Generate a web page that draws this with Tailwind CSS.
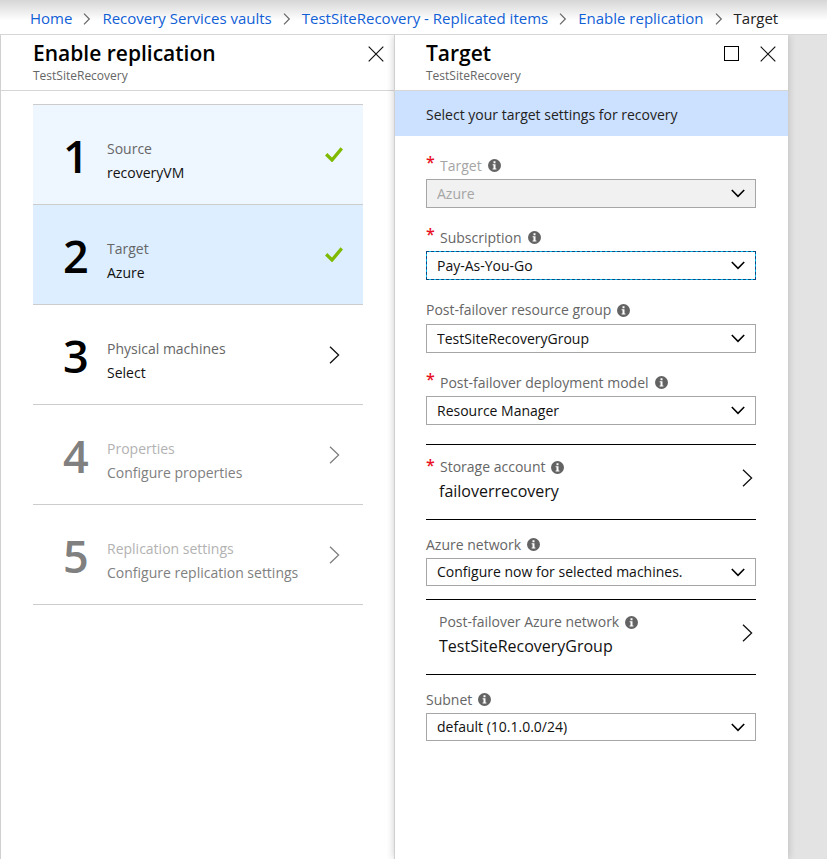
<!DOCTYPE html>
<html lang="en">
<head>
<meta charset="utf-8">
<meta name="viewport" content="width=device-width, initial-scale=1">
<title>Enable replication - Target</title>
<script src="https://cdn.jsdelivr.net/npm/@tailwindcss/browser@4"></script>
</head>
<body class="flex min-h-screen flex-col bg-white font-['Open_Sans','Noto_Sans',sans-serif] text-sm text-[#111]">
<svg class="hidden" aria-hidden="true">
  <symbol id="crumb" viewBox="0 0 8 12"><path d="M1 .7 6.3 6 1 11.3" fill="none" stroke="#666" stroke-width="1.2"/></symbol>
  <symbol id="close" viewBox="0 0 16 16"><path d="M.7.7 15.3 15.3M15.3.7.7 15.3" fill="none" stroke="#111" stroke-width="1.2"/></symbol>
  <symbol id="check" viewBox="0 0 18 15"><path d="M1.2 7.3 7 13 16.8 1.4" fill="none" stroke="#7fba00" stroke-width="3.3"/></symbol>
  <symbol id="next" viewBox="0 0 11 18"><path d="M1 .8 9.6 9 1 17.2" fill="none" stroke="currentColor" stroke-width="1.3"/></symbol>
  <symbol id="down" viewBox="0 0 14 9"><path d="M.8 1 7 7.3 13.2 1" fill="none" stroke="#000" stroke-width="1.6"/></symbol>
  <symbol id="info" viewBox="0 0 13 13"><circle cx="6.5" cy="6.5" r="6.5" fill="#636363"/><path d="M5.5 2.2h2v2h-2zM4.6 5.2h2.9v4.4h.9v1H4.6v-1h.9V6.2h-.9z" fill="#fff"/></symbol>
</svg>

<nav aria-label="Breadcrumb" class="h-[35px] shrink-0 border-b border-[#d6d6d6] bg-linear-to-b from-[#d6d6d6] to-white to-60%">
  <ol class="flex h-[37px] items-center gap-[11px] pl-[30px] text-[15px] whitespace-nowrap text-[#1160d6]">
    <li><a href="#">Home</a></li>
    <li aria-hidden="true"><svg class="h-3 w-2"><use href="#crumb"/></svg></li>
    <li><a href="#">Recovery Services vaults</a></li>
    <li aria-hidden="true"><svg class="h-3 w-2"><use href="#crumb"/></svg></li>
    <li><a href="#">TestSiteRecovery - Replicated items</a></li>
    <li aria-hidden="true"><svg class="h-3 w-2"><use href="#crumb"/></svg></li>
    <li><a href="#">Enable replication</a></li>
    <li aria-hidden="true"><svg class="h-3 w-2"><use href="#crumb"/></svg></li>
    <li class="text-[#222]" aria-current="page">Target</li>
  </ol>
</nav>

<div class="grid flex-1 grid-cols-[minmax(0,1fr)_minmax(0,1fr)_39px] bg-[#e3e3e3]">
  <section class="border-l border-[#d0d0d0] bg-white">
    <header class="flex h-14 justify-between border-b border-[#d6d6d6] pr-[10px] pl-8">
      <div class="pt-1">
        <h1 class="text-[21px] leading-[29px] font-semibold text-black">Enable replication</h1>
        <p class="text-xs leading-4 text-[#666]">TestSiteRecovery</p>
      </div>
      <button type="button" aria-label="Close" class="mt-[11px] h-4 w-4"><svg class="h-4 w-4"><use href="#close"/></svg></button>
    </header>
    <ol class="mt-[13px] mr-[31px] ml-8 border-t border-[#ccc]">
      <li><button type="button" class="flex h-[100px] w-full items-center border-b border-[#ccc] bg-[#eef6ff] pr-5 pl-[30px] text-left">
        <span class="w-11 pt-[3px] text-[45px] leading-[50px] font-semibold text-black">1</span>
        <span class="flex flex-1 flex-col pt-3 leading-6"><span class="text-[#666]">Source</span><span>recoveryVM</span></span>
        <svg class="h-[15px] w-[18px]"><use href="#check"/></svg>
      </button></li>
      <li><button type="button" aria-current="step" class="flex h-[100px] w-full items-center border-b border-[#ccc] bg-[#dceeff] pr-5 pl-[30px] text-left">
        <span class="w-11 pt-[3px] text-[45px] leading-[50px] font-semibold text-black">2</span>
        <span class="flex flex-1 flex-col pt-3 leading-6"><span class="text-[#666]">Target</span><span>Azure</span></span>
        <svg class="h-[15px] w-[18px]"><use href="#check"/></svg>
      </button></li>
      <li><button type="button" class="flex h-[100px] w-full items-center border-b border-[#ccc] pr-[23px] pl-[30px] text-left">
        <span class="w-11 pt-[3px] text-[45px] leading-[50px] font-semibold text-black">3</span>
        <span class="flex flex-1 flex-col pt-3 leading-6"><span class="text-[#666]">Physical machines</span><span>Select</span></span>
        <svg class="h-[18px] w-[11px]"><use href="#next"/></svg>
      </button></li>
      <li><button type="button" disabled class="flex h-[100px] w-full items-center border-b border-[#ccc] pr-[23px] pl-[30px] text-left text-[#808080]">
        <span class="w-11 pt-[3px] text-[45px] leading-[50px] font-semibold">4</span>
        <span class="flex flex-1 flex-col pt-3 leading-6"><span class="text-[#b2b2b2]">Properties</span><span>Configure properties</span></span>
        <svg class="h-[18px] w-[11px]"><use href="#next"/></svg>
      </button></li>
      <li><button type="button" disabled class="flex h-[100px] w-full items-center border-b border-[#ccc] pr-[23px] pl-[30px] text-left text-[#808080]">
        <span class="w-11 pt-[3px] text-[45px] leading-[50px] font-semibold">5</span>
        <span class="flex flex-1 flex-col pt-3 leading-6"><span class="text-[#b2b2b2]">Replication settings</span><span>Configure replication settings</span></span>
        <svg class="h-[18px] w-[11px]"><use href="#next"/></svg>
      </button></li>
    </ol>
  </section>

  <section class="border-l border-[#d0d0d0] bg-white shadow-[0_0_8px_rgba(0,0,0,0.2)] [clip-path:inset(0_-10px_0_-10px)]">
    <header class="flex h-14 justify-between border-b border-[#d6d6d6] pr-3 pl-[31px]">
      <div class="pt-1">
        <h2 class="text-[21px] leading-[29px] font-semibold text-black">Target</h2>
        <p class="text-xs leading-4 text-[#666]">TestSiteRecovery</p>
      </div>
      <div class="flex gap-[21px] pt-[11px]">
        <button type="button" aria-label="Maximize" class="h-[15px] w-[15px] border border-black"></button>
        <button type="button" aria-label="Close" class="h-4 w-4"><svg class="h-4 w-4"><use href="#close"/></svg></button>
      </div>
    </header>
    <p class="bg-[#cce0ff] px-[31px] pt-[14px] pb-[11px] leading-5 text-[#222]">Select your target settings for recovery</p>

    <form class="pt-4 pr-8 pl-[31px]">
      <div class="flex flex-col gap-4">
        <div>
          <label for="target" class="flex h-[27px] items-center text-[#a5a5a5]"><span class="w-[14px] self-start text-base leading-5 font-semibold text-[#e81123]">*</span>Target<svg class="ml-[6px] h-[13px] w-[13px]"><use href="#info"/></svg></label>
          <div class="relative">
            <select id="target" disabled class="block h-[29px] w-full appearance-none border border-[#a6a6a6] bg-[#f1f1f1] px-[10px] text-[#a5a5a5] opacity-100"><option>Azure</option></select>
            <svg class="pointer-events-none absolute top-[10px] right-[11px] h-[9px] w-[14px]"><use href="#down"/></svg>
          </div>
        </div>
        <div>
          <label for="subscription" class="flex h-[27px] items-center text-[#666]"><span class="w-[14px] self-start text-base leading-5 font-semibold text-[#e81123]">*</span>Subscription<svg class="ml-[6px] h-[13px] w-[13px]"><use href="#info"/></svg></label>
          <div class="relative">
            <select id="subscription" class="block h-[29px] w-full appearance-none border border-[#00bcf2] bg-white px-[10px] outline-1 -outline-offset-1 outline-[#0a4a80] outline-dashed"><option>Pay-As-You-Go</option></select>
            <svg class="pointer-events-none absolute top-[10px] right-[11px] h-[9px] w-[14px]"><use href="#down"/></svg>
          </div>
        </div>
        <div>
          <label for="group" class="flex h-7 items-center text-[#666]">Post-failover resource group<svg class="ml-[6px] h-[13px] w-[13px]"><use href="#info"/></svg></label>
          <div class="relative">
            <select id="group" class="block h-[29px] w-full appearance-none border border-[#a6a6a6] bg-white px-[10px]"><option>TestSiteRecoveryGroup</option></select>
            <svg class="pointer-events-none absolute top-[10px] right-[11px] h-[9px] w-[14px]"><use href="#down"/></svg>
          </div>
        </div>
        <div>
          <label for="model" class="flex h-[27px] items-center text-[#666]"><span class="w-[14px] self-start text-base leading-5 font-semibold text-[#e81123]">*</span>Post-failover deployment model<svg class="ml-[6px] h-[13px] w-[13px]"><use href="#info"/></svg></label>
          <div class="relative">
            <select id="model" class="block h-[29px] w-full appearance-none border border-[#a6a6a6] bg-white px-[10px]"><option>Resource Manager</option></select>
            <svg class="pointer-events-none absolute top-[10px] right-[11px] h-[9px] w-[14px]"><use href="#down"/></svg>
          </div>
        </div>
      </div>

      <button type="button" class="mt-[19px] flex h-[76px] w-full justify-between border-y border-black pr-[3px] text-left">
        <span class="pt-[10px]">
          <span class="flex h-6 items-center text-[#666]"><span class="w-[14px] self-start text-base leading-5 font-semibold text-[#e81123]">*</span>Storage account<svg class="ml-[6px] h-[13px] w-[13px]"><use href="#info"/></svg></span>
          <span class="block pl-[13px] text-base leading-6">failoverrecovery</span>
        </span>
        <svg class="mt-6 h-[18px] w-[11px]"><use href="#next"/></svg>
      </button>

      <div class="mt-[11px]">
        <label for="network" class="flex h-[27px] items-center text-[#666]">Azure network<svg class="ml-[6px] h-[13px] w-[13px]"><use href="#info"/></svg></label>
        <div class="relative">
          <select id="network" class="block h-7 w-full appearance-none border border-[#a6a6a6] bg-white px-[10px]"><option>Configure now for selected machines.</option></select>
          <svg class="pointer-events-none absolute top-[10px] right-[11px] h-[9px] w-[14px]"><use href="#down"/></svg>
        </div>
      </div>

      <button type="button" class="mt-[13px] flex h-[76px] w-full justify-between border-y border-black pr-[3px] text-left">
        <span class="pt-[10px] pl-[13px]">
          <span class="flex h-6 items-center text-[#666]">Post-failover Azure network<svg class="ml-[6px] h-[13px] w-[13px]"><use href="#info"/></svg></span>
          <span class="block text-base leading-6">TestSiteRecoveryGroup</span>
        </span>
        <svg class="mt-6 h-[18px] w-[11px]"><use href="#next"/></svg>
      </button>

      <div class="mt-[11px]">
        <label for="subnet" class="flex h-[27px] items-center text-[#666]">Subnet<svg class="ml-[6px] h-[13px] w-[13px]"><use href="#info"/></svg></label>
        <div class="relative">
          <select id="subnet" class="block h-7 w-full appearance-none border border-[#a6a6a6] bg-white px-[10px]"><option>default (10.1.0.0/24)</option></select>
          <svg class="pointer-events-none absolute top-[10px] right-[11px] h-[9px] w-[14px]"><use href="#down"/></svg>
        </div>
      </div>
    </form>
  </section>
</div>
</body>
</html>
